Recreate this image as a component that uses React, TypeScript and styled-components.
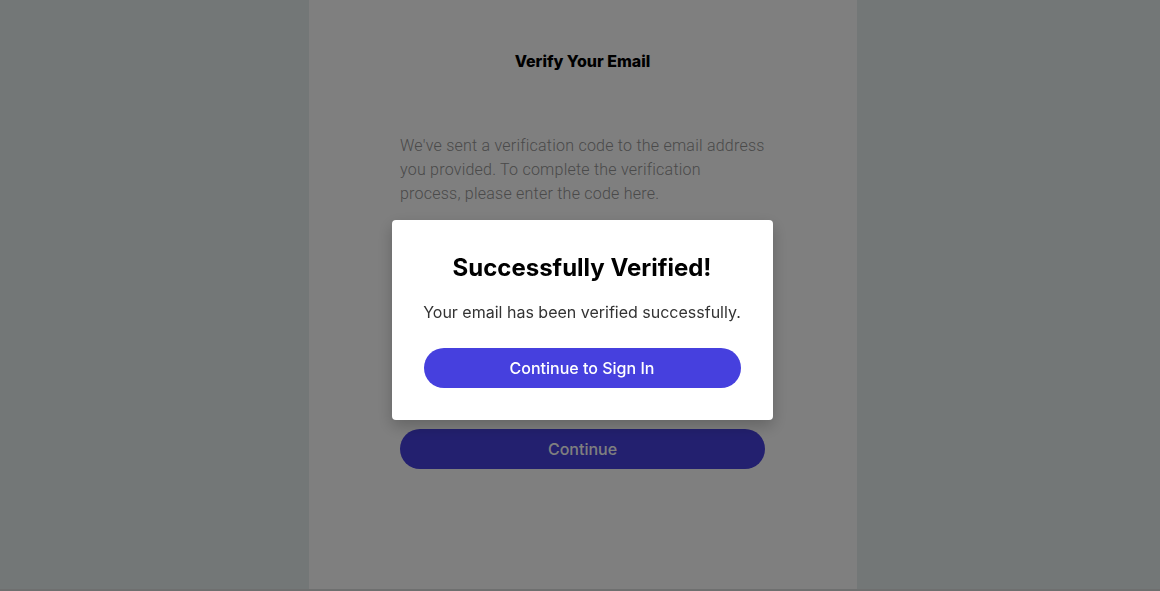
import React from "react";
import styled, { createGlobalStyle } from "styled-components";

const Global = createGlobalStyle`
  html, body { margin: 0; padding: 0; }
  body {
    background: #e6eeee;
    font-family: Inter, "Noto Sans", sans-serif;
    overflow: hidden;
  }
`;

const Page = styled.div`
  height: 591px;
  display: flex;
  flex-direction: column;
`;

const Stage = styled.div`
  height: 589px;
  display: flex;
  justify-content: center;
  padding-left: 6px;
`;

const BottomEdge = styled.div`
  height: 2px;
  background: #dcdfdf;
`;

const Card = styled.main`
  width: 548px;
  box-sizing: border-box;
  background: #ffffff;
  padding: 49px 92px 0 91px;
  display: flex;
  flex-direction: column;
`;

const Heading = styled.h1`
  margin: 0;
  font-family: Inter, sans-serif;
  font-size: 16px;
  line-height: 24px;
  font-weight: 800;
  letter-spacing: 0;
  text-align: center;
  color: #000;
`;

const Intro = styled.p`
  margin: 61px 0 0;
  font-family: Roboto, sans-serif;
  font-weight: 300;
  font-size: 16px;
  line-height: 24px;
  letter-spacing: 0.23px;
  color: #949494;
`;

const CodeRow = styled.div`
  margin-top: 44px;
  display: flex;
  justify-content: space-between;
`;

const CodeBox = styled.div`
  width: 48px;
  height: 52px;
  box-sizing: border-box;
  border: 1px solid #d8d8d8;
  border-radius: 8px;
`;

const Resend = styled.p`
  margin: 24px 0 0;
  font-size: 14px;
  line-height: 20px;
  color: #999;
  text-align: center;
`;

const PrimaryButton = styled.button<{ $mt?: number }>`
  margin-top: ${(p) => p.$mt ?? 0}px;
  width: 100%;
  height: 40px;
  border: none;
  border-radius: 20px;
  background: #4640de;
  color: #ffffff;
  font-family: Inter, sans-serif;
  font-size: 16px;
  font-weight: 500;
  line-height: 20px;
  cursor: pointer;
`;

const Overlay = styled.div`
  position: fixed;
  inset: 0;
  background: rgba(0, 0, 0, 0.5);
  display: flex;
  justify-content: center;
  align-items: flex-start;
  padding: 220px 0 0 4px;
`;

const Modal = styled.div`
  width: 381px;
  box-sizing: border-box;
  background: #ffffff;
  border-radius: 4px;
  padding: 32px;
  box-shadow: 0 6px 16px rgba(0, 0, 0, 0.22);
  display: flex;
  flex-direction: column;
  align-items: center;
`;

const ModalTitle = styled.h2`
  margin: 0;
  font-size: 24px;
  line-height: 32px;
  font-weight: 700;
  color: #000;
  text-align: center;
`;

const ModalText = styled.p`
  margin: 16px 0 0;
  font-size: 16px;
  line-height: 24px;
  color: #333333;
  text-align: center;
  white-space: nowrap;
`;

export default function App() {
  return (
    <>
      <Global />
      <Page>
        <Stage>
          <Card>
            <Heading>Verify Your Email</Heading>
            <Intro>
              We've sent a verification code to the email address you
              provided. To complete the verification process, please enter
              the code here.
            </Intro>
            <CodeRow>
              {Array.from({ length: 6 }).map((_, i) => (
                <CodeBox key={i} />
              ))}
            </CodeRow>
            <Resend>Didn't receive a code? Resend</Resend>
            <PrimaryButton $mt={83}>Continue</PrimaryButton>
          </Card>
        </Stage>
        <BottomEdge />
      </Page>
      <Overlay>
        <Modal>
          <ModalTitle>Successfully Verified!</ModalTitle>
          <ModalText>Your email has been verified successfully.</ModalText>
          <PrimaryButton $mt={24}>Continue to Sign In</PrimaryButton>
        </Modal>
      </Overlay>
    </>
  );
}
